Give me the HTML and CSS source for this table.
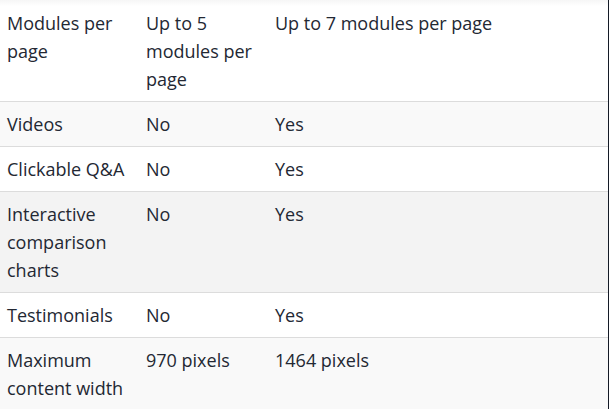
FILE: index.html
```html
<!DOCTYPE html>
<html>
<head>
<meta charset="utf-8">
<link rel="stylesheet" href="styles.css">
</head>
<body>
<div class="wrap">
<table class="cmp">
<colgroup><col class="c1"><col class="c2"><col class="c3"></colgroup>
<tbody>
<tr class="first"><td>Modules per page</td><td>Up to 5 modules per page</td><td>Up to 7 modules per page</td></tr>
<tr class="alt"><td>Videos</td><td>No</td><td>Yes</td></tr>
<tr><td>Clickable Q&amp;A</td><td>No</td><td>Yes</td></tr>
<tr class="alt2"><td>Interactive comparison charts</td><td>No</td><td>Yes</td></tr>
<tr><td>Testimonials</td><td>No</td><td>Yes</td></tr>
<tr class="alt"><td>Maximum content width</td><td>970 pixels</td><td>1464 pixels</td></tr>
</tbody>
</table>
</div>
</body>
</html>
```
FILE: styles.css
```css
html, body { margin: 0; padding: 0; }
body { background: #141a26; height: 409px; overflow: hidden; }
.wrap { width: 608px; height: 409px; background: #f9f9f9; }
.cmp {
  width: 608px;
  border-collapse: collapse;
  table-layout: fixed;
  font-family: "Open Sans", "Noto Sans", sans-serif;
  font-size: 18px;
  line-height: 28px;
  color: #232833;
}
.c1 { width: 139px; }
.c2 { width: 129px; }
.c3 { width: 340px; }
.cmp td { padding: 8px 7px; vertical-align: top; border-bottom: 1px solid #dcdcdc; }
.cmp tr.first td { padding-top: 9px; }
.cmp tr { background: #fff; }
.cmp tr.first { background: linear-gradient(#f6f6f6 0, #fff 6px); }
.cmp tr.alt { background: #f9f9f9; }
.cmp tr.alt2 { background: #f3f3f3; }
.cmp tr:last-child td { border-bottom: 0; }
```
